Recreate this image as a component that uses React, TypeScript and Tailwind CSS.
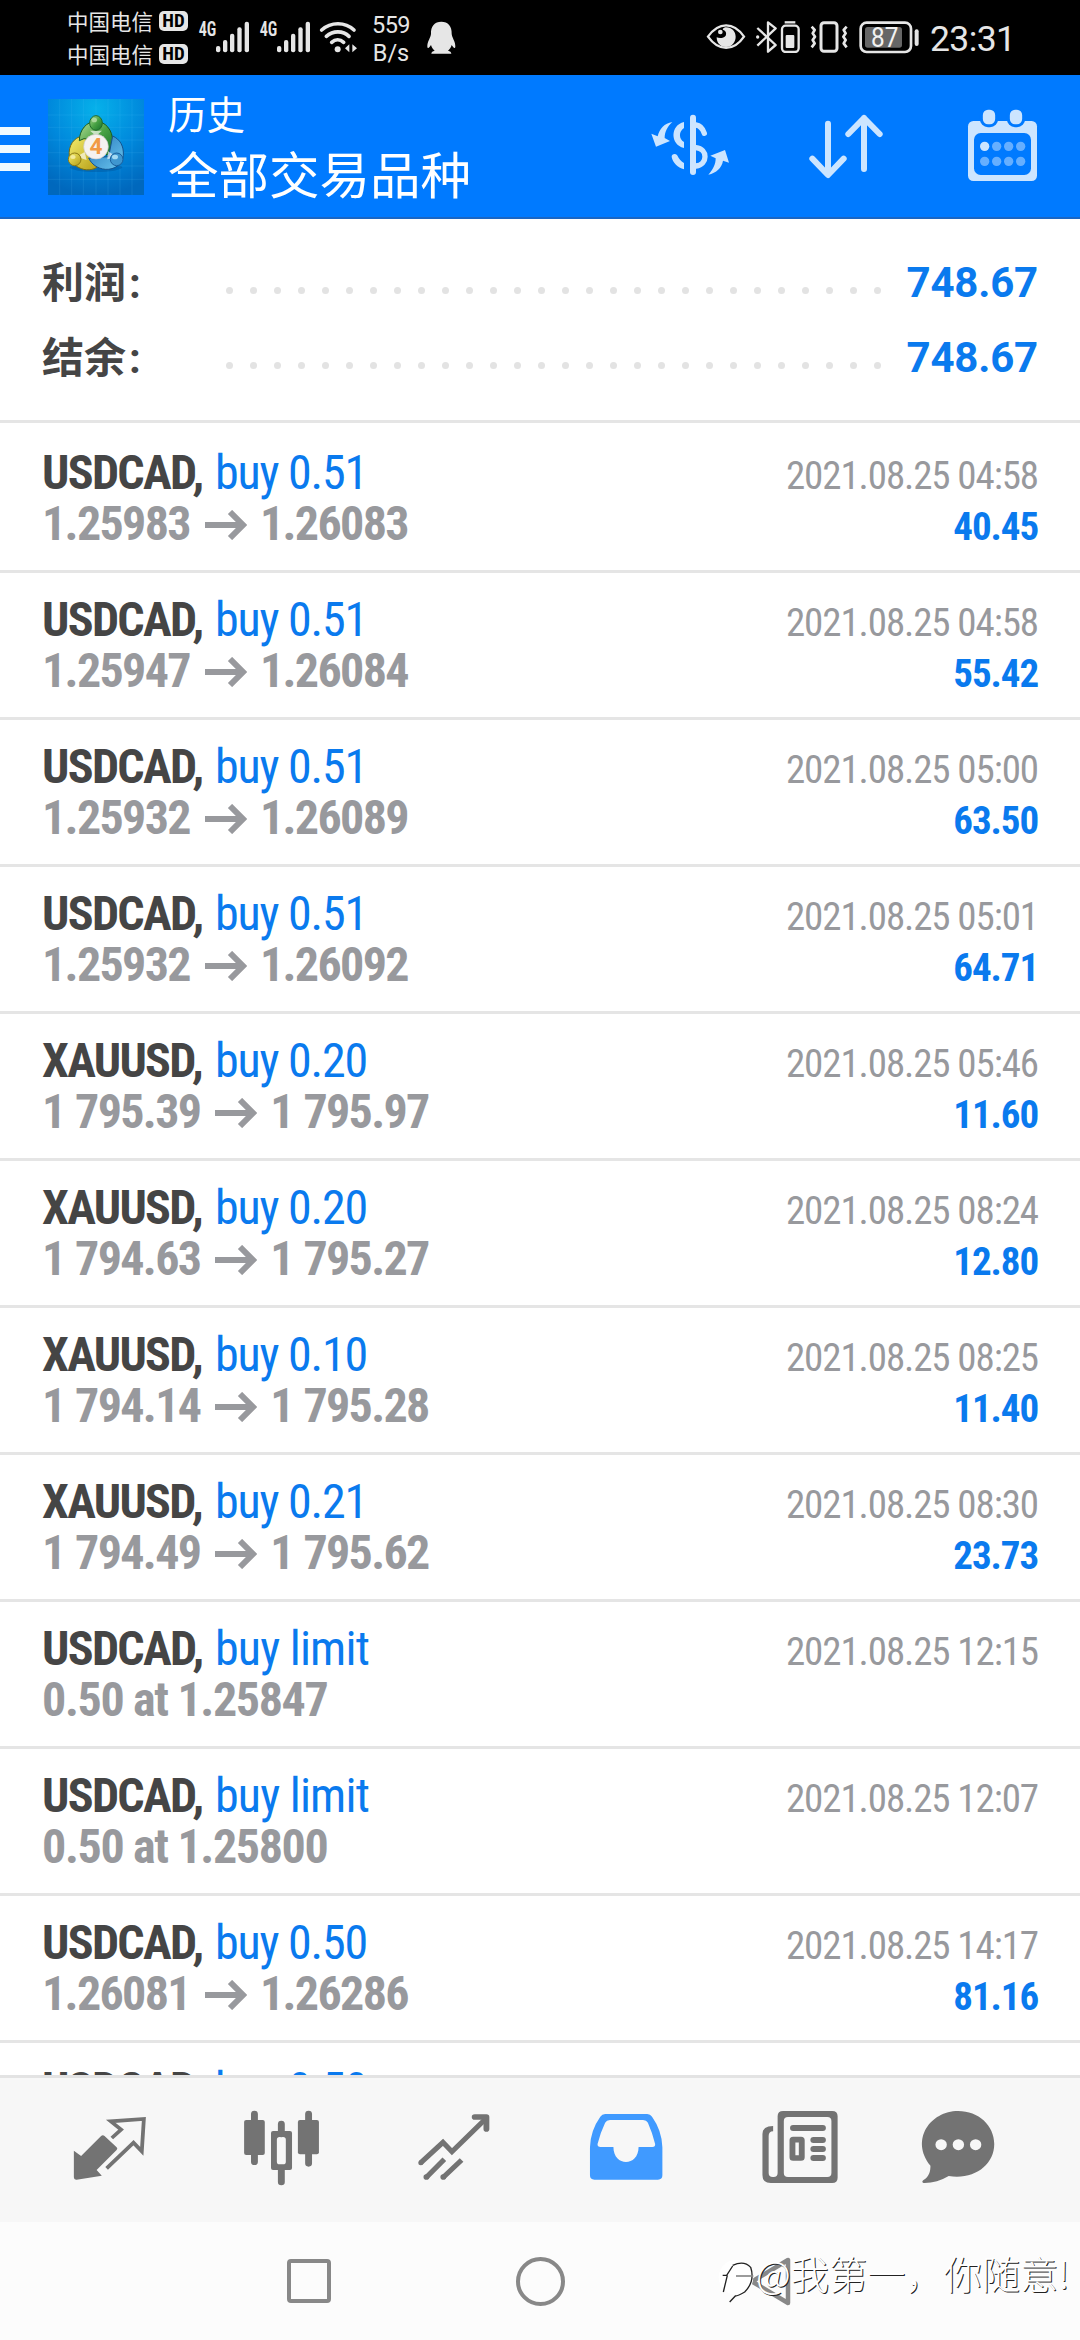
import type { ReactNode } from 'react';

interface Deal {
  symbol: string;
  action: string;
  time: string;
  open?: string;
  close?: string;
  note?: string;
  profit?: string;
}

const deals: Deal[] = [
  { symbol: 'USDCAD', action: 'buy 0.51', time: '2021.08.25 04:58', open: '1.25983', close: '1.26083', profit: '40.45' },
  { symbol: 'USDCAD', action: 'buy 0.51', time: '2021.08.25 04:58', open: '1.25947', close: '1.26084', profit: '55.42' },
  { symbol: 'USDCAD', action: 'buy 0.51', time: '2021.08.25 05:00', open: '1.25932', close: '1.26089', profit: '63.50' },
  { symbol: 'USDCAD', action: 'buy 0.51', time: '2021.08.25 05:01', open: '1.25932', close: '1.26092', profit: '64.71' },
  { symbol: 'XAUUSD', action: 'buy 0.20', time: '2021.08.25 05:46', open: '1 795.39', close: '1 795.97', profit: '11.60' },
  { symbol: 'XAUUSD', action: 'buy 0.20', time: '2021.08.25 08:24', open: '1 794.63', close: '1 795.27', profit: '12.80' },
  { symbol: 'XAUUSD', action: 'buy 0.10', time: '2021.08.25 08:25', open: '1 794.14', close: '1 795.28', profit: '11.40' },
  { symbol: 'XAUUSD', action: 'buy 0.21', time: '2021.08.25 08:30', open: '1 794.49', close: '1 795.62', profit: '23.73' },
  { symbol: 'USDCAD', action: 'buy limit', time: '2021.08.25 12:15', note: '0.50 at 1.25847' },
  { symbol: 'USDCAD', action: 'buy limit', time: '2021.08.25 12:07', note: '0.50 at 1.25800' },
  { symbol: 'USDCAD', action: 'buy 0.50', time: '2021.08.25 14:17', open: '1.26081', close: '1.26286', profit: '81.16' },
  { symbol: 'USDCAD', action: 'buy 0.50', time: '' },
];

function Carrier() {
  return (
    <div className="flex h-[33px] items-center gap-[5px]">
      <span className="w-[87px] whitespace-nowrap text-[21.5px] leading-none [font-family:'Noto_Sans_CJK_SC',sans-serif]">中国电信</span>
      <span className="flex h-[20px] w-[29px] items-center justify-center rounded-[5px] bg-[#e6e6e6] text-[19px] font-bold leading-none text-black [font-family:'Roboto_Condensed',sans-serif]">
        HD
      </span>
    </div>
  );
}

function Signal() {
  return (
    <svg className="h-[33px] w-[52px] overflow-visible" viewBox="413 60 156 99" fill="#e6e6e6">
      <text x="415" y="107" fontSize="59" fontWeight="600" textLength="53" lengthAdjust="spacingAndGlyphs" fontFamily="Roboto Condensed">4G</text>
      <rect x="467" y="138" width="13" height="19" rx="6" />
      <rect x="488" y="120" width="13" height="37" rx="6" />
      <rect x="509" y="101" width="13" height="56" rx="6" />
      <rect x="531" y="82" width="13" height="75" rx="6" />
      <rect x="553" y="65" width="13" height="92" rx="6" />
    </svg>
  );
}

function StatusBar() {
  return (
    <div className="flex h-[75px] shrink-0 items-start bg-black text-[#e6e6e6]">
      <div className="ml-[67px] mt-[4px] flex flex-col">
        <Carrier />
        <Carrier />
      </div>
      <div className="ml-[10px] mt-[20px] flex gap-[9px]">
        <Signal />
        <Signal />
      </div>
      <svg className="ml-[8px] mt-[20px] h-[33px] w-[39px]" viewBox="775 60 117 99" fill="none" stroke="#e6e6e6" strokeWidth="11" strokeLinecap="round">
        <path d="M783 90c28-25 70-25 97 0M797 109c20-18 50-18 68 0M813 127c11-10 25-10 36 0" />
        <circle cx="831" cy="148" r="9" fill="#e6e6e6" stroke="none" />
        <path d="M866 133v24l-13-12zM875 133v24l14-12z" fill="#e6e6e6" stroke="none" />
      </svg>
      <div className="ml-[10px] mt-[12px] w-[46px] text-center text-[23.5px] leading-[27.5px] [font-family:Roboto,sans-serif]">
        <div className="tracking-[-0.6px]">559</div>
        <div>B/s</div>
      </div>
      <svg className="ml-[13px] mt-[20px] h-[35px] w-[29px]" viewBox="1097 60 87 105" fill="#e6e6e6">
        <path d="M1140 65c-20 0-32 14-31 36 0 10-12 24-11 39 1 8 7 2 11-5 2 8 6 13 11 17-6 1-10 4-10 9h60c0-5-4-8-10-9 5-4 9-9 11-17 4 7 10 13 11 5 1-15-11-29-11-39 1-22-11-36-31-36z" />
      </svg>

      <div className="ml-auto mr-[64px] mt-[20px] flex items-start">
        <svg className="h-[33px] w-[40px]" viewBox="45 30 120 99" fill="none" stroke="#e6e6e6" strokeWidth="7">
          <path d="M51 80c32-45 77-45 108 0-31 45-76 45-108 0z" />
          <path d="M105 52c18 0 29 13 29 28s-11 31-29 31-28-13-28-29c8 4 22 3 27-5 4-8-1-16-7-17-5-2 3-8 8-8z" fill="#e6e6e6" stroke="none" />
          <circle cx="88" cy="66" r="7" fill="#e6e6e6" stroke="none" />
        </svg>
        <svg className="ml-[10px] h-[33px] w-[44px]" viewBox="195 30 132 99" fill="none" stroke="#e6e6e6" strokeWidth="7">
          <path d="M199 54l55 51-23 20V37l23 18-55 52" strokeLinejoin="round" />
          <circle cx="200" cy="81" r="5" fill="#e6e6e6" stroke="none" />
          <rect x="273" y="47" width="50" height="79" rx="11" />
          <path d="M281 37h32" />
          <rect x="284" y="75" width="26" height="39" rx="3" fill="#e6e6e6" stroke="none" />
        </svg>
        <svg className="ml-[10px] h-[33px] w-[39px]" viewBox="357 30 117 99" fill="none" stroke="#e6e6e6" strokeWidth="9">
          <rect x="390" y="38" width="48" height="86" rx="9" />
          <path d="M362 50l9 10-6 10 7 10-7 10 6 10-9 12M467 50l-9 10 6 10-7 10 7 10-6 10 9 12" strokeWidth="8" strokeLinejoin="round" />
        </svg>
        <svg className="ml-[10px] h-[34px] w-[61px] overflow-visible" viewBox="505 30 183 102">
          <rect x="510" y="38" width="151" height="88" rx="18" fill="none" stroke="#e6e6e6" strokeWidth="8" />
          <rect x="523" y="51" width="111" height="62" rx="8" fill="#666" />
          <rect x="672" y="58" width="12" height="50" rx="6" fill="#e6e6e6" />
          <text x="541" y="110" fontSize="82" textLength="82" lengthAdjust="spacingAndGlyphs" fill="#f2f2f2" fontFamily="Roboto">87</text>
        </svg>
        <span className="ml-[10px] mt-px w-[86px] whitespace-nowrap text-[35.5px] leading-[36px] tracking-[-0.6px] [font-family:Roboto,sans-serif]">23:31</span>
      </div>
    </div>
  );
}

function AppLogo() {
  return (
    <svg className="ml-[18px] mt-[24px] size-[96px] shrink-0" viewBox="24 27 288 288">
      <defs>
        <radialGradient id="sky" cx="0.5" cy="0.1" r="0.9">
          <stop offset="0" stopColor="#06b1ea" />
          <stop offset="0.55" stopColor="#0088dc" />
          <stop offset="1" stopColor="#0068bd" />
        </radialGradient>
        <linearGradient id="green" x1="0" y1="0" x2="1" y2="1">
          <stop offset="0" stopColor="#b4dc96" />
          <stop offset="0.5" stopColor="#4aa345" />
          <stop offset="1" stopColor="#15702a" />
        </linearGradient>
        <linearGradient id="yellow" x1="0" y1="0" x2="1" y2="1">
          <stop offset="0" stopColor="#f5ee6e" />
          <stop offset="1" stopColor="#b49c14" />
        </linearGradient>
        <linearGradient id="blue" x1="0" y1="0" x2="1" y2="1">
          <stop offset="0" stopColor="#2272b8" />
          <stop offset="1" stopColor="#6cc8f0" />
        </linearGradient>
      </defs>
      <rect x="24" y="27" width="288" height="288" fill="url(#sky)" />
      <path d="M59 27v288M95 27v288M130 27v288M168 27v288M204 27v288M240 27v288M276 27v288M24 75h288M24 112h288M24 150h288M24 188h288M24 228h288M24 268h288" stroke="#5cc4f5" strokeOpacity="0.22" strokeWidth="2" />
      <ellipse cx="168" cy="232" rx="78" ry="14" fill="#004a8c" opacity="0.35" />
      <path d="M88 200c-4-34 14-58 40-62 12-2 20 4 24 12l26 74c-8 14-34 20-54 12-20-8-34-20-36-36z" fill="url(#yellow)" stroke="#756a12" strokeWidth="3" />
      <path d="M118 152c0-32 22-58 50-58s50 26 50 60c0 20-8 34-18 42l-30-44-38-6z" fill="url(#green)" stroke="#1a5c20" strokeWidth="3" />
      <path d="M218 138c22 10 34 30 32 58-2 26-26 44-54 42-24-2-42-16-50-34l60-4z" fill="url(#blue)" stroke="#14538e" strokeWidth="3" />
      <path d="M150 122h36l-18 16zM110 200l24-14 6 24zM230 200l-26-16-2 24z" fill="#fff" fillOpacity="0.65" />
      <ellipse cx="168" cy="99" rx="19" ry="22" fill="url(#green)" stroke="#1f6a2a" strokeWidth="3" />
      <circle cx="104" cy="208" r="19" fill="url(#yellow)" stroke="#8c7a14" strokeWidth="3" />
      <circle cx="230" cy="208" r="19" fill="#3f96cf" stroke="#1b5f9c" strokeWidth="3" />
      <ellipse cx="225" cy="201" rx="9" ry="7" fill="#a5daf3" />
      <ellipse cx="99" cy="201" rx="8" ry="6" fill="#f2ea9c" />
      <ellipse cx="163" cy="90" rx="8" ry="7" fill="#a9d79b" />
      <circle cx="168" cy="170" r="37" fill="#f5f2f0" stroke="#c9c9c9" strokeWidth="2" />
      <text x="168" y="193" textAnchor="middle" fontSize="68" fontWeight="700" fontFamily="Roboto" fill="#f19a45">4</text>
    </svg>
  );
}

function HeaderAction({ viewBox, children }: { viewBox: string; children: ReactNode }) {
  return (
    <button className="flex h-full w-[156px] items-center justify-center">
      <svg className="size-[80px]" viewBox={viewBox} fill="none" stroke="#cce5ff" strokeLinecap="round" strokeLinejoin="round">
        {children}
      </svg>
    </button>
  );
}

function Header() {
  return (
    <div className="flex h-[144px] shrink-0 border-b-2 border-[#1a66c4] bg-[#007aff]">
      <div className="mt-[52px] flex flex-col gap-[10px]">
        <span className="h-[8px] w-[30px] bg-[#f0faff]" />
        <span className="h-[8px] w-[30px] bg-[#f0faff]" />
        <span className="h-[8px] w-[30px] bg-[#f0faff]" />
      </div>
      <AppLogo />
      <div className="ml-[24px] mt-[10px] whitespace-nowrap text-white [font-family:'Noto_Sans_CJK_SC',sans-serif]">
        <div className="text-[38.5px] leading-[54px]">历史</div>
        <div className="text-[50.5px] leading-[67px]">全部交易品种</div>
      </div>
      <div className="ml-auto flex">
        <HeaderAction viewBox="30 18 240 240">
          <path d="M159 53v163" strokeWidth="18" />
          <path d="M168 75q17 2 25 25M168 143c36 4 36 50 0 55" strokeWidth="16" />
          <path d="M132 66c-42 10-42 68 0 78v-18c-16-9-16-32 0-42zM132 189q-12-6-21-24c-6-6-17-2-16 6 4 18 18 32 37 37z" fill="#cce5ff" stroke="none" />
          <path d="M97 66c-24 4-38 20-44 43l-19-8 14 39 42-17-16-9c0-18 8-34 23-48zM205 224c24-6 40-20 44-42l18 6-12-38-44 17 16 8c0 18-8 34-22 49z" fill="#cce5ff" stroke="none" />
        </HeaderAction>
        <HeaderAction viewBox="498 18 240 240">
          <path d="M564 71v153M517 176l47 49 47-49M672 207V54M625 102l47-48 47 48" strokeWidth="18" />
        </HeaderAction>
        <HeaderAction viewBox="966 18 240 240">
          <rect x="984" y="63" width="207" height="180" rx="16" fill="#cce5ff" stroke="none" />
          <rect x="1002" y="99" width="171" height="126" rx="20" fill="#007aff" stroke="none" />
          <rect x="1024" y="25" width="46" height="52" rx="20" fill="#cce5ff" stroke="#007aff" strokeWidth="9" />
          <rect x="1105" y="25" width="46" height="52" rx="20" fill="#cce5ff" stroke="#007aff" strokeWidth="9" />
          <circle cx="1034" cy="139" r="14" fill="#cce5ff" stroke="none" />
          <g fill="#66afff" stroke="none">
            <circle cx="1070" cy="139" r="14" />
            <circle cx="1106" cy="139" r="14" />
            <circle cx="1142" cy="139" r="14" />
            <circle cx="1034" cy="184" r="14" />
            <circle cx="1070" cy="184" r="14" />
            <circle cx="1106" cy="184" r="14" />
            <circle cx="1142" cy="184" r="14" />
          </g>
        </HeaderAction>
      </div>
    </div>
  );
}

function SummaryRow({ label, value }: { label: string; value: string }) {
  return (
    <div className="flex h-[75px] items-center">
      <span className="-mt-px w-[184px] whitespace-nowrap text-[42px] font-bold leading-[60px] text-[#454545] [font-family:'Noto_Sans_CJK_SC',sans-serif]">
        {label}
        <span className="ml-[3px] [font-family:Roboto,sans-serif]">:</span>
      </span>
      <div className="mt-[16px] flex w-[655px] justify-between">
        {Array.from({ length: 28 }, (_, i) => (
          <span key={i} className="size-[7px] rounded-full bg-[#e3e3e3]" />
        ))}
      </div>
      <span className="-mr-px ml-auto text-[42px] font-bold leading-[60px] tracking-[-0.2px] text-[#0a7aee] [font-family:Roboto,sans-serif]">
        {value}
      </span>
    </div>
  );
}

function Arrow() {
  return (
    <svg className="ml-[15px] mr-[13px] h-[30px] w-[42px]" viewBox="0 0 42 30" fill="none" stroke="#98999d" strokeWidth="6">
      <path d="M0 15h37M25 2l13 13-13 13" />
    </svg>
  );
}

function DealRow({ deal }: { deal: Deal }) {
  return (
    <div className="h-[147px] shrink-0 border-b-[3px] border-[#e5e5e5] pl-[42px] pr-[42px] pt-[21px] [font-family:'Roboto_Condensed',Roboto,sans-serif]">
      <div className="flex h-[51px] items-baseline whitespace-nowrap text-[48px] leading-[52px]">
        <span className="w-[173px] font-bold tracking-[-1.7px] text-[#454545]">{deal.symbol},</span>
        <span className={deal.note ? 'tracking-[-0.8px] text-[#0a7aee]' : 'tracking-[-1.2px] text-[#0a7aee]'}>{deal.action}</span>
        <span className="ml-auto text-[39px] tracking-[-1.1px] text-[#98999d]">{deal.time}</span>
      </div>
      <div className="flex h-[52px] items-baseline whitespace-nowrap text-[48px] font-bold leading-[52px] text-[#98999d]">
        {deal.note && <span className="tracking-[-1.35px]">{deal.note}</span>}
        {deal.open && (
          <>
            <span className="tracking-[-1.65px] [word-spacing:1px]">{deal.open}</span>
            <Arrow />
            <span className="tracking-[-1.65px] [word-spacing:1px]">{deal.close}</span>
          </>
        )}
        {deal.profit && <span className="ml-auto text-[39px] tracking-[-1.1px] text-[#0a7aee]">{deal.profit}</span>}
      </div>
    </div>
  );
}

function Tab({ viewBox, children }: { viewBox: string; children: ReactNode }) {
  return (
    <button className="flex flex-1 items-center justify-center">
      <svg className="size-[80px] overflow-visible" viewBox={viewBox} preserveAspectRatio="none" fill="#737373">
        {children}
      </svg>
    </button>
  );
}

function TabBar() {
  return (
    <div className="flex h-[147px] shrink-0 border-t-[3px] border-[#e3e3e3] bg-[#f7f7f7] px-[22px]">
      <Tab viewBox="198 210 232 240">
        <path d="M215 332l21 16 58-60q5-5 10 0l35 34q4 4 0 8l-58 60 15 17-73 12q-8 1-8-7z" />
        <path d="M325 294l27-25-30-25 96-7-6 97-24-26-78 77" fill="none" stroke="#737373" strokeWidth="11" />
      </Tab>
      <Tab viewBox="700 210 232 240">
        <path d="M739 222v143M896 222v148M817 252v30M817 385v41" stroke="#737373" strokeWidth="20" strokeLinecap="round" />
        <rect x="709" y="240" width="60" height="105" rx="6" />
        <rect x="865" y="240" width="61" height="103" rx="6" />
        <path fillRule="evenodd" d="M793 273h49q6 0 6 6v105q0 6-6 6h-49q-6 0-6-6V279q0-6 6-6zM812 291q-8 0-8 8v66q0 8 8 8h10q8 0 8-8v-66q0-8-8-8z" />
      </Tab>
      <Tab viewBox="1201 210 232 240">
        <path d="M1221 368l64-61 26 28 98-99M1237 412l52-54M1286 412l53-52" fill="none" stroke="#737373" strokeWidth="15" />
        <circle cx="1221" cy="368" r="7.5" />
        <circle cx="1237" cy="411" r="8.5" />
        <circle cx="1286" cy="411" r="8.5" />
        <path d="M1377 231h34v36" fill="none" stroke="#737373" strokeWidth="17" strokeLinecap="round" strokeLinejoin="round" />
      </Tab>
      <Tab viewBox="134.5 210 232 240">
        <path
          fill="#409aff"
          fillRule="evenodd"
          d="M190 222h122q9 0 14 8 29 42 30 92v84q0 13-13 13H159q-13 0-13-13v-84q1-50 30-92 5-8 14-8zM204 240q-10 0-14 8-14 30-22 64-1 9 9 9h37c0 60 73 60 73 0h40q9 0 8-9-8-34-21-64-4-8-14-8z"
        />
      </Tab>
      <Tab viewBox="636 210 232 240">
        <path fillRule="evenodd" d="M706 213h142q16 0 16 16v184q0 16-16 16h-178q-24 0-24-24V282q0-24 31-24v16q-13 0-13 14v111q0 12 12 12h2q12 0 12-12V229q0-16 16-16zM720 231q-12 0-12 12v156q0 12 12 12h114q12 0 12-12V243q0-12-12-12z" />
        <path d="M735 264h86M794 300h27M794 327h27M794 354h27" stroke="#737373" strokeWidth="18" strokeLinecap="round" />
        <rect x="733" y="299" width="27" height="55" rx="2" fill="none" stroke="#737373" strokeWidth="17" />
      </Tab>
      <Tab viewBox="1137.5 210 232 240">
        <path d="M1213 213c60 0 105 44 105 99 0 63-58 108-132 96-22 14-46 21-70 21-8 0-8-6-3-9 16-10 20-26 20-43-60-78 0-164 80-164z" />
        <g fill="#f7f7f7">
          <circle cx="1164" cy="314" r="16.5" />
          <circle cx="1214" cy="314" r="16.5" />
          <circle cx="1264" cy="314" r="16.5" />
        </g>
      </Tab>
    </div>
  );
}

function Watermark() {
  return (
    <div className="absolute left-[718px] top-[29px] flex items-start whitespace-nowrap">
      <svg className="mt-[9px] h-[44px] w-[38px]" viewBox="24 60 114 132" fill="none">
        <circle cx="78" cy="112" r="52" fill="#fff" />
        <path d="M68 76q34-16 54 6 14 42-18 74-20 12-28 12l-17 18M38 106h12l18-28M52 106l-12 50" stroke="#222" strokeWidth="4" />
        <path d="M78 108h52" stroke="#888" strokeWidth="5" />
      </svg>
      <span className="text-[38.2px] font-light leading-[44px] text-white [font-family:'Noto_Sans_CJK_SC',sans-serif] [text-shadow:1px_1px_0_#222]">
        @我第一，你随意!
      </span>
    </div>
  );
}

function SystemNav() {
  return (
    <div className="relative flex flex-1 items-center justify-center overflow-hidden bg-[#fcfcfc]">
      <div className="flex w-[231px] justify-center">
        <span className="size-[44px] rounded-[4px] border-4 border-[#888]" />
      </div>
      <div className="flex w-[231px] justify-center">
        <span className="size-[49px] rounded-full border-4 border-[#888]" />
      </div>
      <div className="flex w-[231px] justify-center">
        <svg className="h-[49px] w-[44px]" viewBox="0 0 44 49" fill="none" stroke="#888" strokeWidth="4.5" strokeLinejoin="round">
          <path d="M39 3v43L3 24.5z" />
        </svg>
      </div>
      <Watermark />
    </div>
  );
}

export default function App() {
  return (
    <div className="flex h-[2340px] w-[1080px] flex-col overflow-hidden bg-white">
      <StatusBar />
      <Header />
      <div className="h-[204px] shrink-0 border-b-[3px] border-[#e5e5e5] pl-[42px] pr-[43px] pt-[26px]">
        <SummaryRow label="利润" value="748.67" />
        <SummaryRow label="结余" value="748.67" />
      </div>
      <div className="flex h-[1652px] shrink-0 flex-col overflow-hidden pt-[3px]">
        {deals.map((deal, i) => (
          <DealRow key={i} deal={deal} />
        ))}
      </div>
      <TabBar />
      <SystemNav />
    </div>
  );
}
